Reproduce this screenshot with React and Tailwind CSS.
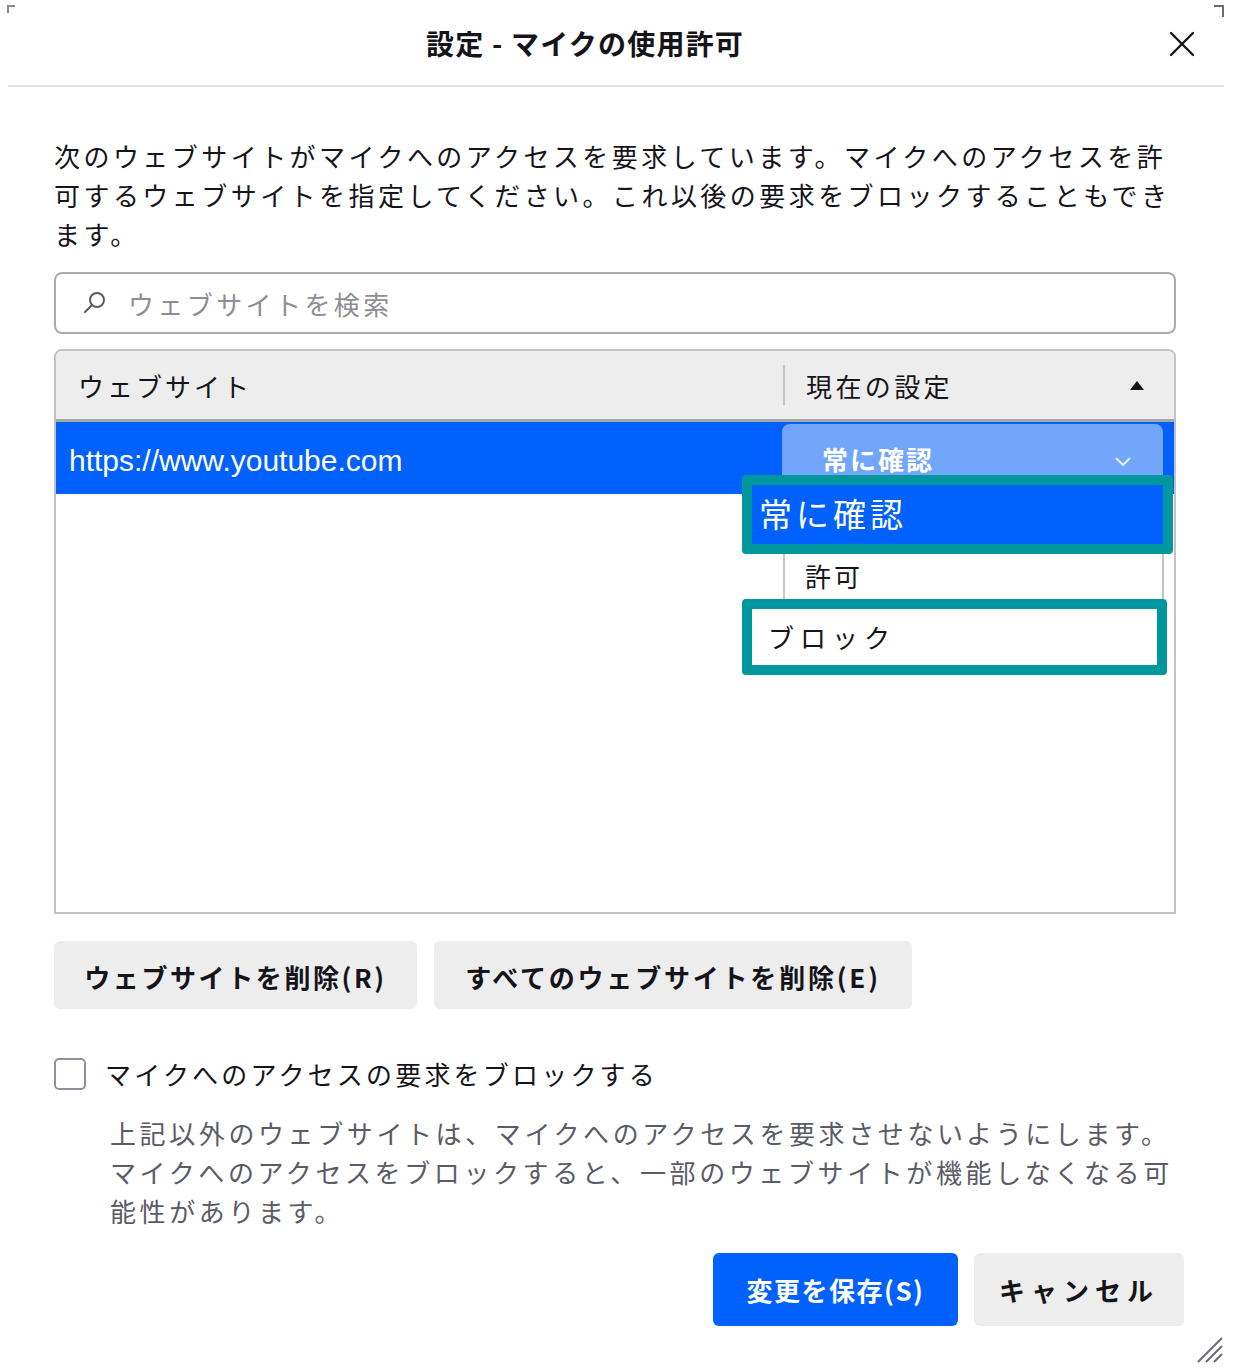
import { useState } from 'react'

const JP = { fontFamily: '"Noto Sans CJK JP", "Noto Sans", sans-serif' }

function SearchIcon() {
  return (
    <svg width="26" height="26" viewBox="0 0 26 26" fill="none" stroke="#5b5b66" strokeWidth="2">
      <circle cx="15" cy="10" r="7" />
      <path d="M10 15 L3 22" strokeLinecap="round" />
    </svg>
  )
}

function CloseIcon() {
  return (
    <svg width="28" height="28" viewBox="0 0 28 28" stroke="#15141a" strokeWidth="2.4" strokeLinecap="round">
      <path d="M3 3 L25 25 M25 3 L3 25" />
    </svg>
  )
}

function Grip() {
  return (
    <svg width="30" height="30" viewBox="0 0 30 30" stroke="#6b6b73" strokeWidth="2">
      <path d="M28 4 L4 28 M28 12 L12 28 M28 20 L20 28" />
    </svg>
  )
}

export default function App() {
  const [blockAll, setBlockAll] = useState(false)

  return (
    <div className="relative w-[1237px] h-[1370px] bg-white text-[#15141a] overflow-hidden" style={JP}>
      {/* window corner marks */}
      <svg className="absolute left-[7px] top-[5px]" width="10" height="10" viewBox="0 0 10 10">
        <path d="M0 0 H8 V2 H2 V8 H0 Z" fill="#8a8a8a" />
      </svg>
      <svg className="absolute left-[1214px] top-[5px]" width="10" height="12" viewBox="0 0 10 12">
        <path d="M0 0 H10 V12 H8 V2 H0 Z" fill="#6a6a6a" />
      </svg>

      {/* title bar */}
      <div className="ml-[8px] w-[1216px] flex items-center h-[87px] border-b-2 border-[#e2e2e6]">
        <div className="flex-1 text-center text-[28px] font-bold tracking-[1.2px] leading-none">
          設定 - マイクの使用許可
        </div>
        <button className="w-[62px] h-[60px] flex items-center justify-center pr-[22px] mt-[2px]">
          <CloseIcon />
        </button>
      </div>

      <div className="pl-[54px] pr-[61px]">
        <p className="mt-[49px] text-[26px] leading-[39px] tracking-[3.45px] whitespace-nowrap">
          次のウェブサイトがマイクへのアクセスを要求しています。マイクへのアクセスを許<br />
          可するウェブサイトを指定してください。これ以後の要求をブロックすることもでき<br />
          ます。
        </p>

        {/* search */}
        <div className="mt-[19px] h-[62px] rounded-[8px] border-2 border-[#a9a9b2] flex items-center pl-[26px] gap-[20px]">
          <SearchIcon />
          <span className="text-[26px] tracking-[3.4px] text-[#8d8d94]">ウェブサイトを検索</span>
        </div>

        {/* table */}
        <div className="relative mt-[15px] h-[565px] rounded-t-[8px] border-2 border-[#c2c2c7]">
          <div className="flex items-center h-[71px] bg-[#ededed] rounded-t-[6px] border-b-[3px] border-[#a6a6a6]">
            <div className="w-[727px] pl-[22px] text-[26px] tracking-[3px]">ウェブサイト</div>
            <div className="w-[2px] h-[40px] bg-[#c4c4c4]" />
            <div className="flex-1 flex items-center justify-between pl-[21px] pr-[30px]">
              <span className="text-[26px] tracking-[3.4px]">現在の設定</span>
              <svg width="14" height="9" viewBox="0 0 14 9"><path d="M0 9 L7 0 L14 9 Z" fill="#15141a" /></svg>
            </div>
          </div>

          <div className="flex h-[72px] bg-[#0061fe]">
            <div className="w-[726px] pl-[13px] flex items-center text-white text-[30px] pt-[4px]" style={{ fontFamily: '"Liberation Sans", Arial, sans-serif' }}>
              https://www.youtube.com
            </div>
            <div className="mt-[2px] w-[381px] h-[70px] rounded-t-[8px] bg-[#72a6fb] flex items-start justify-between pl-[40px] pr-[32px] pt-[18px]">
              <span className="text-[26px] font-bold text-white tracking-[2px] leading-[34px]">常に確認</span>
              <svg className="mt-[15px]" width="16" height="9" viewBox="0 0 16 9" fill="none" stroke="#eaf1ff" strokeWidth="2">
                <path d="M1 1 L8 8 L15 1" />
              </svg>
            </div>
          </div>

          {/* open dropdown list */}
          <div className="absolute left-[727px] top-[185px] w-[381px] h-[90px] bg-white border-x-2 border-[#c4c4c4]">
            <div className="pl-[20px] pt-[23px] text-[26px] tracking-[3px] leading-[34px]">許可</div>
          </div>

          {/* highlighted options */}
          <div className="absolute left-[686px] top-[124px] w-[431px] h-[79px] rounded-[4px] border-[10px] border-[#00979f] bg-[#0061fe] flex items-center pl-[7px]">
            <span className="text-[33px] text-white tracking-[4px] leading-none pb-[2px]">常に確認</span>
          </div>
          <div className="absolute left-[686px] top-[248px] w-[425px] h-[76px] rounded-[4px] border-[10px] border-[#00979f] bg-white flex items-center pl-[16px]">
            <span className="text-[26px] tracking-[6px] leading-none">ブロック</span>
          </div>
        </div>

        {/* remove buttons */}
        <div className="mt-[27px] flex gap-[17px]">
          <button className="w-[363px] h-[68px] rounded-[6px] bg-[#ededed] text-[26px] font-bold tracking-[2.6px] pt-[2px]">
            ウェブサイトを削除(R)
          </button>
          <button className="w-[478px] h-[68px] rounded-[6px] bg-[#ededed] text-[26px] font-bold tracking-[2.8px] pt-[2px]">
            すべてのウェブサイトを削除(E)
          </button>
        </div>

        {/* block checkbox */}
        <label className="mt-[49px] flex items-center gap-[19px] cursor-pointer">
          <input type="checkbox" checked={blockAll} onChange={e => setBlockAll(e.target.checked)} className="sr-only" />
          <span className="w-[32px] h-[32px] rounded-[5px] border-2 border-[#8f8f9d] bg-white" />
          <span className="text-[26px] tracking-[3.2px] leading-[32px]">マイクへのアクセスの要求をブロックする</span>
        </label>

        <p className="mt-[23px] pl-[56px] text-[26px] leading-[39px] tracking-[3.6px] text-[#5b5b66] whitespace-nowrap">
          上記以外のウェブサイトは、マイクへのアクセスを要求させないようにします。<br />
          マイクへのアクセスをブロックすると、一部のウェブサイトが機能しなくなる可<br />
          能性があります。
        </p>
      </div>

      {/* footer */}
      <div className="mt-[23px] flex justify-end gap-[16px] pr-[53px]">
        <button className="w-[245px] h-[73px] rounded-[6px] bg-[#0061fe] text-white text-[26px] font-bold tracking-[1.5px]">
          変更を保存(S)
        </button>
        <button className="w-[210px] h-[73px] rounded-[6px] bg-[#ededed] text-[26px] font-bold tracking-[6px]">
          キャンセル
        </button>
      </div>

      <div className="absolute left-[1194px] top-[1334px]">
        <Grip />
      </div>
    </div>
  )
}
